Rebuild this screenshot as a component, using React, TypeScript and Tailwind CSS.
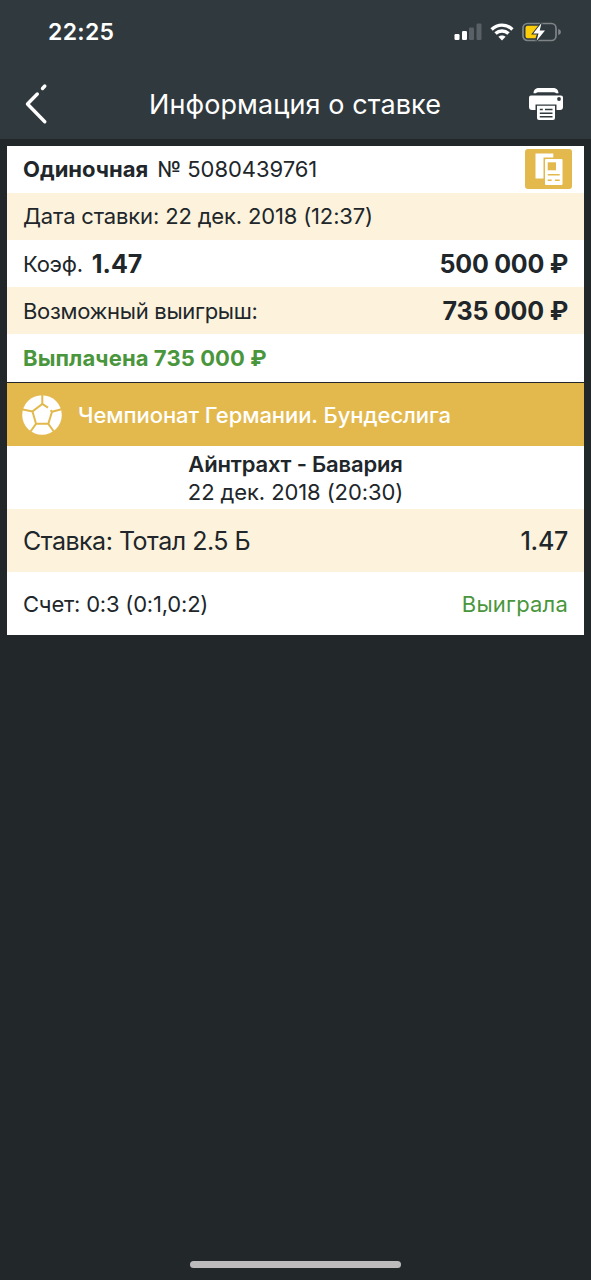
import type { ReactNode } from 'react';
import clsx from 'clsx';

interface RowProps {
  children: ReactNode;
  className?: string;
  tinted?: boolean;
}

function Row({ children, className, tinted }: RowProps) {
  return (
    <div
      className={clsx(
        'flex items-center justify-between whitespace-nowrap px-4',
        tinted ? 'bg-[#fdf3dd]' : 'bg-white',
        className,
      )}
    >
      {children}
    </div>
  );
}

function SignalIcon() {
  return (
    <svg width="28" height="18" viewBox="0 0 28 18" fill="#fff">
      <rect x="0.5" y="11" width="5" height="6" rx="1.2" />
      <rect x="8" y="8" width="5" height="9" rx="1.2" />
      <rect x="15" y="4.5" width="5" height="12.5" rx="1.2" fill="#596166" />
      <rect x="22.5" y="0.5" width="5" height="16.5" rx="1.2" fill="#596166" />
    </svg>
  );
}

function WifiIcon() {
  return (
    <svg width="24" height="18" viewBox="0 0 24 18" fill="none" stroke="#fff" strokeWidth="3.4">
      <path d="M1.600 6.400C7.600 .7 16.400 .7 22.400 6.400" />
      <path d="M5.500 10.600C9.300 7.100 14.700 7.100 18.500 10.600" />
      <path d="M12 17.500 8.400 13.800C10.500 11.900 13.500 11.900 15.600 13.800Z" fill="#fff" stroke="none" />
    </svg>
  );
}

function BatteryIcon() {
  return (
    <svg width="40" height="20" viewBox="0 0 40 20" fill="none">
      <rect x="1" y="1.5" width="33" height="17" rx="4.5" stroke="#7e8487" strokeWidth="1.7" />
      <path d="M36.200 7v6c2-.7 2.700-1.700 2.700-3s-.7-2.300-2.700-3Z" fill="#7e8487" />
      <path d="M5.500 3.700h12L12 12h3l-1.500 4.300h-8a2 2 0 0 1-2-2V5.700a2 2 0 0 1 2-2Z" fill="#fccd0a" />
      <path d="M19.500 1 11.200 11.500h5.300L14.500 19 23 8.400h-5.300Z" fill="#fff" stroke="#30393d" strokeWidth="2" paintOrder="stroke" />
    </svg>
  );
}

function BackIcon() {
  return (
    <svg width="24" height="42" viewBox="0 0 24 42" fill="none" stroke="#fff" strokeWidth="3.4" strokeLinecap="round" strokeLinejoin="round">
      <path d="M20.800 38.800 3.500 21 13.300 11" />
      <path d="M18.500 5.500 20.800 3" />
    </svg>
  );
}

function PrinterIcon() {
  return (
    <svg width="36" height="34" viewBox="0 0 36 34" fill="none">
      <path d="M5.500 6.200C5.500 2.700 8 1 11 1h14c3 0 5.500 1.700 5.500 5.200H28C27.500 5.500 26.500 5.200 25 5.200H11C9.500 5.200 8.500 5.500 8 6.200Z" fill="#fff" />
      <path d="M3 8.500h30a2 2 0 0 1 2 2V20a3 3 0 0 1-3 3h-3.500v-5.500h-21V23H4a3 3 0 0 1-3-3v-9.500a2 2 0 0 1 2-2Z" fill="#fff" />
      <circle cx="31" cy="12" r="1.9" fill="#30393d" />
      <path d="M9 18.800h18V31a2 2 0 0 1-2 2H11a2 2 0 0 1-2-2Z" fill="#fff" />
      <path d="M11.800 22.500h3M17 22.500h7.500M11.800 26.200h12.700M11.800 29.800h12.700" stroke="#30393d" strokeWidth="1.4" />
    </svg>
  );
}

function CouponIcon() {
  return (
    <svg width="47" height="40" viewBox="0 0 47 40" fill="none">
      <rect width="47" height="40" rx="3" fill="#e3b94e" />
      <path d="M10.500 4.500h17.800v4H18.500v21h-8Z" fill="#fff" />
      <rect x="20" y="10" width="17.500" height="26" rx="1" fill="#fff" />
      <rect x="22.700" y="13.300" width="8.300" height="8" fill="#e3b94e" />
      <path d="M22.700 25.700h12M22.700 31.200h4M30 31.200h4.700" stroke="#e3b94e" strokeWidth="1.6" />
    </svg>
  );
}

function SoccerBallIcon() {
  return (
    <svg width="40" height="40" viewBox="0 0 40 40" fill="none">
      <circle cx="20" cy="20" r="19.8" fill="#fff" />
      <g stroke="#e3b94e" strokeWidth="2">
        <path d="M26 12.700 20.300 9 10.500 16.500 14 28.800H26.300L30 16.700 28.500 15.300" />
        <path d="M20.300 0v9M10.500 16.500.8 14.500M30 16.700l9.500-2.500M14 28.800 8.500 36.500M26.300 28.800l5.500 7.700" />
      </g>
    </svg>
  );
}

function StatusBar() {
  return (
    <div className="flex h-16 items-center justify-between pl-12 pr-[29px]">
      <span className="text-[23px] font-semibold tracking-[0.3px]">22:25</span>
      <div className="flex items-center gap-2">
        <SignalIcon />
        <WifiIcon />
        <BatteryIcon />
      </div>
    </div>
  );
}

function Header() {
  return (
    <header className="h-[139px] bg-[#30393d] text-white">
      <StatusBar />
      <div className="flex h-[75px] items-center justify-between pl-6 pr-[27px]">
        <div className="w-[38px] pt-1">
          <BackIcon />
        </div>
        <h1 className="whitespace-nowrap pt-1.5 text-[27px] leading-8 tracking-[0.1px]">Информация о ставке</h1>
        <div className="pt-[5px]">
          <PrinterIcon />
        </div>
      </div>
    </header>
  );
}

export default function App() {
  return (
    <div className="flex h-[1280px] w-[591px] flex-col bg-[#22272a] font-['Inter','Liberation_Sans',sans-serif] text-[#20262a]">
      <Header />

      <main className="mx-[7px] mt-[7px] flex flex-col text-[22px] leading-7">
        <Row className="h-[47px] pb-0.5 pr-3">
          <div className="flex gap-[9px]">
            <span className="font-bold">Одиночная</span>
            <span className="tracking-[-0.05px]">№ 5080439761</span>
          </div>
          <CouponIcon />
        </Row>
        <Row tinted className="h-[47px] pb-0.5">
          <span className="tracking-[-0.16px]">Дата ставки: 22 дек. 2018 (12:37)</span>
        </Row>
        <Row className="h-[47px]">
          <div className="flex items-center gap-[9px]">
            <span className="tracking-[-0.25px]">Коэф.</span>
            <span className="text-[25px] font-bold">1.47</span>
          </div>
          <span className="text-[25px] font-bold tracking-[-0.25px]">500 000 ₽</span>
        </Row>
        <Row tinted className="h-[47px]">
          <span className="tracking-[-0.3px]">Возможный выигрыш:</span>
          <span className="text-[25px] font-bold tracking-[-0.2px]">735 000 ₽</span>
        </Row>
        <Row className="h-[49px] border-b border-[#20262a] text-[#4a963c]">
          <span className="font-bold tracking-[0.1px]">Выплачена 735 000 ₽</span>
        </Row>

        <div className="flex h-[63px] items-center gap-4 whitespace-nowrap bg-[#e3b94e] pl-[15px] text-white">
          <SoccerBallIcon />
          <span className="font-medium tracking-[-0.06px]">Чемпионат Германии. Бундеслига</span>
        </div>
        <div className="flex h-[63px] flex-col items-center justify-center whitespace-nowrap bg-white">
          <span className="font-semibold tracking-[-0.18px]">Айнтрахт - Бавария</span>
          <span className="tracking-[-0.1px]">22 дек. 2018 (20:30)</span>
        </div>
        <Row tinted className="h-[63px] text-[25px]">
          <span className="tracking-[-0.5px]">Ставка: Тотал 2.5 Б</span>
          <span className="font-medium tracking-[-0.3px]">1.47</span>
        </Row>
        <Row className="h-[63px]">
          <span className="tracking-[-0.2px]">Счет: 0:3 (0:1,0:2)</span>
          <span className="tracking-[0.2px] text-[#4a963c]">Выиграла</span>
        </Row>
      </main>

      <div className="mb-3 mt-auto h-[7px] w-[211px] self-center rounded-full bg-[#bcbcbd]" />
    </div>
  );
}
